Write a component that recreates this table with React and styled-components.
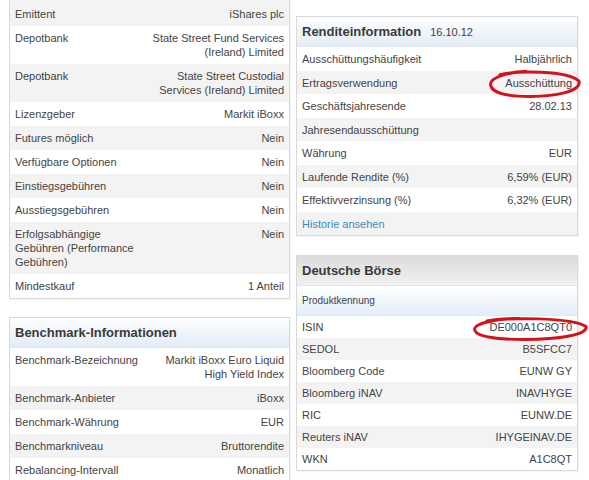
import React from 'react';
import styled, {createGlobalStyle, css} from 'styled-components';

const GlobalStyle = createGlobalStyle`
    body {
        margin: 0;
        background: #fff;
        font-family: "Liberation Sans", Arial, sans-serif;
        font-size: 11px;
        color: #434343;
    }
`;

const Page = styled.div`
    display: flex;
    gap: 6px;
    padding-left: 9px;
    width: 589px;
    height: 480px;
    box-sizing: border-box;
    overflow: hidden;
`;

const Column = styled.div`
    display: flex;
    flex-direction: column;
    flex: 0 0 ${p => p.$width}px;
    gap: ${p => p.$gap}px;
    padding-top: ${p => p.$top}px;
`;

const Panel = styled.section`
    border: 1px solid #d9d9d9;
    background: #fff;
    box-shadow: 1px 1px 1px rgba(0, 0, 0, 0.04);
    ${p => p.$cut && css`
        border-top: none;
        & > div:first-child {
            padding-top: 7px;
        }
    `}
`;

const Header = styled.div`
    display: flex;
    align-items: baseline;
    gap: 9px;
    padding: 8px 5px 7px;
    line-height: 14px;
    border-bottom: 1px solid #e1e7ee;
    background: ${p => p.$tone === 'gray'
        ? 'linear-gradient(#dcdcdc, #f1f1f1)'
        : 'linear-gradient(#fdfeff, #e3ecf5)'};
    h3 {
        margin: 0;
        font-size: 13px;
        font-weight: bold;
        color: #3a3a3a;
    }
    span {
        font-size: 11px;
    }
`;

const SubHeader = styled.div`
    padding: 9px 5px 8px;
    line-height: 12px;
    font-size: 10px;
    border-bottom: 1px solid #e1e7ee;
    background: linear-gradient(#ffffff, #e4eef7);
`;

const Row = styled.div`
    display: grid;
    grid-template-columns: 125px 1fr;
    column-gap: 5px;
    padding: ${p => p.$pad};
    line-height: 14px;
    background: ${p => (p.$shade ? '#f3f3f3' : '#fff')};
`;

const Value = styled.div`
    position: relative;
    text-align: right;
`;

const Link = styled.a`
    grid-column: 1 / -1;
    color: #3a8ac3;
    text-decoration: none;
`;

const Mark = styled.svg`
    position: absolute;
    right: ${p => p.$right}px;
    top: ${p => p.$top}px;
    overflow: visible;
    pointer-events: none;
`;

const Circle = ({w, h, right, top}) => (
    <Mark $right={right} $top={top} width={w} height={h} viewBox={`0 0 ${w} ${h}`}>
        <path
            d={`M ${w * 0.12} ${h * 0.2}
                C ${w * 0.3} ${1.5} ${w * 0.85} ${1} ${w - 2} ${h * 0.42}
                C ${w + 0.5} ${h * 0.75} ${w * 0.75} ${h - 1.5} ${w * 0.45} ${h - 1.5}
                C ${w * 0.15} ${h - 1.5} ${1.5} ${h * 0.78} ${1.5} ${h * 0.52}
                C ${1.5} ${h * 0.3} ${w * 0.2} ${h * 0.1} ${w * 0.4} ${2.5}`}
            fill="none"
            stroke="#d4121c"
            strokeWidth="3"
            strokeLinecap="round"
        />
    </Mark>
);

const fund = [
    ['Emittent', 'iShares plc'],
    ['Depotbank', 'State Street Fund Services (Ireland) Limited'],
    ['Depotbank', 'State Street Custodial Services (Ireland) Limited'],
    ['Lizenzgeber', 'Markit iBoxx'],
    ['Futures möglich', 'Nein'],
    ['Verfügbare Optionen', 'Nein'],
    ['Einstiegsgebühren', 'Nein'],
    ['Ausstiegsgebühren', 'Nein'],
    ['Erfolgsabhängige Gebühren (Performance Gebühren)', 'Nein'],
    ['Mindestkauf', '1 Anteil']
];

const benchmark = [
    ['Benchmark-Bezeichnung', 'Markit iBoxx Euro Liquid High Yield Index'],
    ['Benchmark-Anbieter', 'iBoxx'],
    ['Benchmark-Währung', 'EUR'],
    ['Benchmarkniveau', 'Bruttorendite'],
    ['Rebalancing-Intervall', 'Monatlich']
];

const yields = [
    ['Ausschüttungshäufigkeit', 'Halbjährlich'],
    ['Ertragsverwendung', 'Ausschüttung', {w: 92, h: 29, right: -9, top: -7}],
    ['Geschäftsjahresende', '28.02.13'],
    ['Jahresendausschüttung', ''],
    ['Währung', 'EUR'],
    ['Laufende Rendite (%)', '6,59% (EUR)'],
    ['Effektivverzinsung (%)', '6,32% (EUR)']
];

const codes = [
    ['ISIN', 'DE000A1C8QT0', {w: 115, h: 25, right: -16, top: -4}],
    ['SEDOL', 'B5SFCC7'],
    ['Bloomberg Code', 'EUNW GY'],
    ['Bloomberg iNAV', 'INAVHYGE'],
    ['RIC', 'EUNW.DE'],
    ['Reuters iNAV', 'IHYGEINAV.DE'],
    ['WKN', 'A1C8QT']
];

const Rows = ({items, pad, offset = 0}) =>
    items.map(([label, value, mark], i) => (
        <Row key={label + i} $pad={pad} $shade={(i + offset) % 2 === 1}>
            <div>{label}</div>
            <Value>
                {value}
                {mark && <Circle {...mark} />}
            </Value>
        </Row>
    ));

const App = () => (
    <>
        <GlobalStyle />
        <Page>
            <Column $width={281} $gap={18} $top={0}>
                <Panel $cut>
                    <Rows items={fund} pad="5px" offset={1} />
                </Panel>
                <Panel>
                    <Header>
                        <h3>Benchmark-Informationen</h3>
                    </Header>
                    <Rows items={benchmark} pad="5px" />
                </Panel>
            </Column>
            <Column $width={282} $gap={19} $top={16}>
                <Panel>
                    <Header>
                        <h3>Renditeinformation</h3>
                        <span>16.10.12</span>
                    </Header>
                    <Rows items={yields} pad="5px 5px 4.5px" />
                    <Row $pad="5px 5px 4.5px" $shade>
                        <Link href="#">Historie ansehen</Link>
                    </Row>
                </Panel>
                <Panel>
                    <Header $tone="gray">
                        <h3>Deutsche Börse</h3>
                    </Header>
                    <SubHeader>Produktkennung</SubHeader>
                    <Rows items={codes} pad="4px 5px" />
                </Panel>
            </Column>
        </Page>
    </>
);

export default App;
